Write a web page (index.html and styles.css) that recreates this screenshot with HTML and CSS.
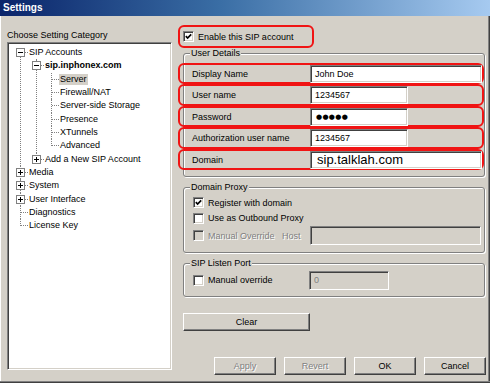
FILE: index.html
```html
<!DOCTYPE html>
<html lang="en">

<head>
    <meta charset="UTF-8">
    <title>Settings</title>
    <link rel="stylesheet" href="styles.css">
</head>

<body>
    <div class="window">
        <div class="titlebar">Settings</div>

        <div class="content">
            <div class="sidebar">
                <div class="caption">Choose Setting Category</div>

                <div class="tree-box">
                    <ul class="tree">
                        <li>
                            <div class="node"><span class="toggle"></span><span class="label">SIP Accounts</span></div>
                            <ul>
                                <li>
                                    <div class="node"><span class="toggle"></span><span class="label bold">sip.inphonex.com</span></div>
                                    <ul class="deep">
                                        <li><div class="node"><span class="label selected">Server</span></div></li>
                                        <li><div class="node"><span class="label">Firewall/NAT</span></div></li>
                                        <li><div class="node"><span class="label">Server-side Storage</span></div></li>
                                        <li><div class="node"><span class="label">Presence</span></div></li>
                                        <li><div class="node"><span class="label">XTunnels</span></div></li>
                                        <li><div class="node"><span class="label">Advanced</span></div></li>
                                    </ul>
                                </li>
                                <li><div class="node"><span class="toggle plus"></span><span class="label">Add a New SIP Account</span></div></li>
                            </ul>
                        </li>
                        <li><div class="node"><span class="toggle plus"></span><span class="label">Media</span></div></li>
                        <li><div class="node"><span class="toggle plus"></span><span class="label">System</span></div></li>
                        <li><div class="node"><span class="toggle plus"></span><span class="label">User Interface</span></div></li>
                        <li><div class="node"><span class="label">Diagnostics</span></div></li>
                        <li><div class="node"><span class="label">License Key</span></div></li>
                    </ul>
                </div>
            </div>

            <div class="main">
                <div class="enable">
                    <span class="checkbox checked"><svg viewBox="0 0 7 7"><path d="M0.8 3.2 L2.6 5 L6.2 1.4"/></svg></span>
                    Enable this SIP account
                </div>

                <div class="group details">
                    <span class="legend">User Details</span>

                    <div class="field">
                        <span class="field-name">Display Name</span>
                        <div class="input wide">John Doe</div>
                    </div>
                    <div class="field">
                        <span class="field-name">User name</span>
                        <div class="input">1234567</div>
                    </div>
                    <div class="field">
                        <span class="field-name">Password</span>
                        <div class="input dots">●●●●●</div>
                    </div>
                    <div class="field">
                        <span class="field-name">Authorization user name</span>
                        <div class="input">1234567</div>
                    </div>
                    <div class="field">
                        <span class="field-name">Domain</span>
                        <div class="input wide big">sip.talklah.com</div>
                    </div>
                </div>

                <div class="group proxy">
                    <span class="legend">Domain Proxy</span>

                    <div class="check-row">
                        <span class="checkbox checked"><svg viewBox="0 0 7 7"><path d="M0.8 3.2 L2.6 5 L6.2 1.4"/></svg></span>
                        Register with domain
                    </div>
                    <div class="check-row">
                        <span class="checkbox"></span>
                        Use as Outbound Proxy
                    </div>
                    <div class="override-row">
                        <div class="check-row disabled">
                            <span class="checkbox off"></span>
                            Manual Override
                        </div>
                        <span class="disabled-text">Host</span>
                        <div class="input off host"></div>
                    </div>
                </div>

                <div class="group port">
                    <span class="legend">SIP Listen Port</span>

                    <div class="port-row">
                        <div class="check-row">
                            <span class="checkbox"></span>
                            Manual override
                        </div>
                        <div class="input off port-input">0</div>
                    </div>
                </div>

                <button class="btn clear">Clear</button>

                <div class="footer">
                    <button class="btn disabled-text">Apply</button>
                    <button class="btn disabled-text">Revert</button>
                    <button class="btn">OK</button>
                    <button class="btn">Cancel</button>
                </div>
            </div>
        </div>
    </div>
</body>

</html>
```

FILE: styles.css
```css
body {
    margin: 0;
    font-family: "Liberation Sans", Arial, sans-serif;
    font-size: 9px;
    color: #000;
}

.window {
    width: 490px;
    height: 383px;
    display: flex;
    flex-direction: column;
    background: #d4d0c8;
    box-shadow: inset 0 -1px #404040, inset 0 -2px #808080, inset -1px 0 #404040, inset -2px 0 #808080, inset 1px 0 #fff;
}

.titlebar {
    height: 16px;
    line-height: 16px;
    padding-left: 3px;
    font-size: 10px;
    font-weight: bold;
    color: #fff;
    background: linear-gradient(to right, #0a246a, #3a6ea5 45%, #a6caf0);
}

.content {
    flex: 1;
    display: flex;
}

/* left tree */
.sidebar {
    width: 165px;
    margin-left: 7px;
    padding: 13px 0;
    display: flex;
    flex-direction: column;
    box-sizing: border-box;
}

.caption {
    line-height: 13px;
}

.tree-box {
    flex: 1;
    background: #fff;
    border: 1px solid;
    border-color: #808080 #fff #fff #808080;
    box-shadow: inset 1px 1px #404040, inset -1px -1px #d4d0c8;
    padding: 3px 0 0 1px;
}

.tree,
.tree ul {
    list-style: none;
    margin: 0;
    padding: 0;
}

.tree ul {
    margin-left: 16px;
}

.tree ul.deep {
    margin-left: 15px;
}

.tree li {
    position: relative;
}

.tree li::before {
    content: '';
    position: absolute;
    left: 11px;
    top: 0;
    bottom: 0;
    border-left: 1px dotted #808080;
}

.tree li:last-child::before {
    bottom: auto;
    height: 7px;
}

.tree > li:first-child::before {
    top: 7px;
}

.node {
    position: relative;
    height: 13.33px;
    display: flex;
    align-items: center;
    padding-left: 19px;
}

.node::before {
    content: '';
    position: absolute;
    left: 12px;
    top: 6px;
    width: 7px;
    border-top: 1px dotted #808080;
}

.toggle {
    position: absolute;
    left: 7px;
    top: 2px;
    width: 9px;
    height: 9px;
    box-sizing: border-box;
    border: 1px solid #808080;
    background: #fff;
    z-index: 1;
}

.toggle::after {
    content: '';
    position: absolute;
    left: 1px;
    top: 3px;
    width: 5px;
    height: 1px;
    background: #000;
}

.toggle.plus::before {
    content: '';
    position: absolute;
    left: 3px;
    top: 1px;
    width: 1px;
    height: 5px;
    background: #000;
}

.label {
    line-height: 11px;
    padding: 0 1px;
    white-space: nowrap;
}

.label.bold {
    font-weight: bold;
}

.label.selected {
    background: #d4d0c8;
}

/* right side */
.main {
    width: 308px;
    margin-left: 6px;
    padding-bottom: 8px;
    display: flex;
    flex-direction: column;
    box-sizing: border-box;
}

.enable {
    margin-top: 9px;
    width: 136px;
    height: 23px;
    box-sizing: border-box;
    border: 2px solid #f01414;
    border-radius: 6px;
    padding-left: 3px;
    display: flex;
    align-items: center;
}

.checkbox {
    width: 11px;
    height: 11px;
    box-sizing: border-box;
    margin-right: 4px;
    flex-shrink: 0;
    background: #fff;
    border: 1px solid;
    border-color: #808080 #fff #fff #808080;
    box-shadow: inset 1px 1px #404040, inset -1px -1px #d4d0c8;
    padding: 1px;
    display: flex;
}

.checkbox svg {
    width: 7px;
    height: 7px;
    fill: none;
    stroke: #000;
    stroke-width: 1.7;
}

.checkbox.off {
    background: #d4d0c8;
}

.group {
    position: relative;
    margin: 10px 1px 0 5px;
    border: 1px solid #808080;
    border-radius: 3px;
    box-shadow: inset 1px 1px #fff, 1px 1px #fff;
}

.legend {
    position: absolute;
    left: 6px;
    top: -6px;
    padding: 0 1px;
    line-height: 11px;
    background: #d4d0c8;
}

.group.details {
    margin-top: 5px;
    padding: 8.5px 0 6px;
}

.field {
    height: 21.5px;
    margin-left: -6px;
    box-sizing: border-box;
    border: 2px solid #f01414;
    border-radius: 6px;
    display: grid;
    grid-template-columns: 130px 1fr;
    align-items: center;
}

.field-name {
    padding-left: 12px;
}

.input {
    height: 18px;
    width: 98px;
    box-sizing: border-box;
    padding-left: 4px;
    line-height: 16px;
    background: #fff;
    border: 1px solid;
    border-color: #808080 #fff #fff #808080;
    box-shadow: inset 1px 1px #404040, inset -1px -1px #d4d0c8;
    white-space: nowrap;
}

.input.wide {
    width: 172px;
}

.input.big {
    font-size: 13px;
    padding-left: 6px;
}

.input.dots {
    font-family: "DejaVu Sans", sans-serif;
    font-size: 7px;
    letter-spacing: 0.3px;
    padding-left: 5px;
}

.input.off {
    background: #d4d0c8;
    color: #808080;
}

.input.host {
    width: 171px;
    height: 19px;
}

.group.proxy {
    padding: 7px 0 7px 9px;
}

.check-row {
    height: 15.5px;
    display: flex;
    align-items: center;
}

.override-row {
    height: 19px;
    display: grid;
    grid-template-columns: 89px 28px 171px;
    align-items: center;
}

.disabled,
.disabled-text {
    color: #808080;
    text-shadow: 1px 1px #fff;
}

.group.port {
    padding: 6.5px 0 5.5px 9px;
}

.port-row {
    height: 19.5px;
    display: grid;
    grid-template-columns: 116px 80px;
    align-items: center;
}

.input.port-input {
    width: 80px;
    height: 19.5px;
}

.btn {
    height: 18px;
    padding: 0;
    font-family: inherit;
    font-size: 9px;
    background: #d4d0c8;
    border: 1px solid;
    border-color: #fff #404040 #404040 #fff;
    box-shadow: inset -1px -1px #808080;
}

.btn.clear {
    margin: 16px 0 0 5px;
    width: 127px;
    height: 18.5px;
}

.footer {
    margin-top: auto;
    display: flex;
    justify-content: flex-end;
    gap: 8px;
}

.footer .btn {
    width: 62px;
}
```
